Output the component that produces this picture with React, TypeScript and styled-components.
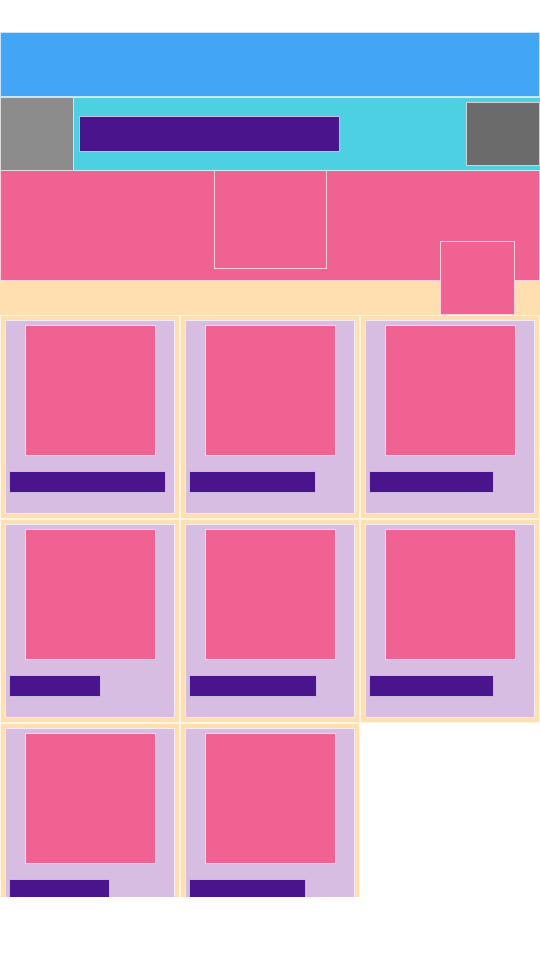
import styled, { createGlobalStyle } from 'styled-components';

const GlobalStyle = createGlobalStyle`
  * {
    box-sizing: border-box;
  }
  body {
    margin: 0;
    background: #ffffff;
    font-family: 'Liberation Sans', Arial, sans-serif;
  }
`;

const line = 'rgba(255, 255, 255, 0.7)';

const Frame = styled.div`
  display: flex;
  flex-direction: column;
  width: 540px;
  height: 865px;
  margin-top: 32px;
  overflow: hidden;

  & > * {
    flex-shrink: 0;
  }
`;

const Header = styled.header`
  height: 65px;
  background: #42a5f5;
  border: 1px solid ${line};
`;

const Toolbar = styled.div`
  display: flex;
  align-items: center;
  justify-content: space-between;
  height: 74px;
  background: #4dd0e1;
  border: 1px solid ${line};
  border-left: none;
  border-right: none;
`;

const Logo = styled.div`
  width: 74px;
  height: 74px;
  margin: -1px 0;
  background: #8c8c8c;
  border: 1px solid ${line};
`;

const SearchBar = styled.div`
  width: 261px;
  height: 36px;
  margin-left: 5px;
  margin-right: auto;
  background: #4a148c;
  border: 1px solid ${line};
`;

const Avatar = styled.div`
  width: 74px;
  height: 64px;
  background: #6b6b6b;
  border: 1px solid ${line};
`;

const Hero = styled.section`
  display: flex;
  justify-content: center;
  height: 110px;
  background: #f06292;
  border: 1px solid ${line};
  border-top: none;
`;

const HeroImage = styled.div`
  width: 113px;
  height: 98px;
  background: #f06292;
  border: 1px solid ${line};
  border-top: none;
`;

const Band = styled.div`
  display: flex;
  align-items: flex-end;
  justify-content: flex-end;
  height: 34px;
  padding-right: 25px;
  background: #ffdfb0;
`;

const Badge = styled.div`
  flex-shrink: 0;
  width: 75px;
  height: 74px;
  background: #f06292;
  border: 1px solid ${line};
`;

const Grid = styled.div`
  display: grid;
  grid-template-columns: repeat(3, 180px);
  grid-auto-rows: 204px;
`;

const Cell = styled.div`
  padding: 4px;
  background: #ffdfb0;
  border: 1px solid ${line};
`;

const Card = styled.div`
  display: flex;
  flex-direction: column;
  align-items: flex-start;
  height: 194px;
  padding: 4px 3px;
  background: #d7bde2;
  border: 1px solid ${line};
`;

const Thumb = styled.div`
  align-self: center;
  width: 131px;
  height: 131px;
  background: #f06292;
  border: 1px solid ${line};
`;

const Caption = styled.div<{ $width: number }>`
  width: ${(props) => props.$width}px;
  height: 22px;
  margin-top: 15px;
  background: #4a148c;
  border: 1px solid ${line};
`;

const captions = [157, 127, 125, 92, 128, 125, 101, 117];

const App = () => {
  return (
    <>
      <GlobalStyle />
      <Frame>
        <Header />
        <Toolbar>
          <Logo />
          <SearchBar />
          <Avatar />
        </Toolbar>
        <Hero>
          <HeroImage />
        </Hero>
        <Band>
          <Badge />
        </Band>
        <Grid>
          {captions.map((width, i) => (
            <Cell key={i}>
              <Card>
                <Thumb />
                <Caption $width={width} />
              </Card>
            </Cell>
          ))}
        </Grid>
      </Frame>
    </>
  );
};

export default App;
